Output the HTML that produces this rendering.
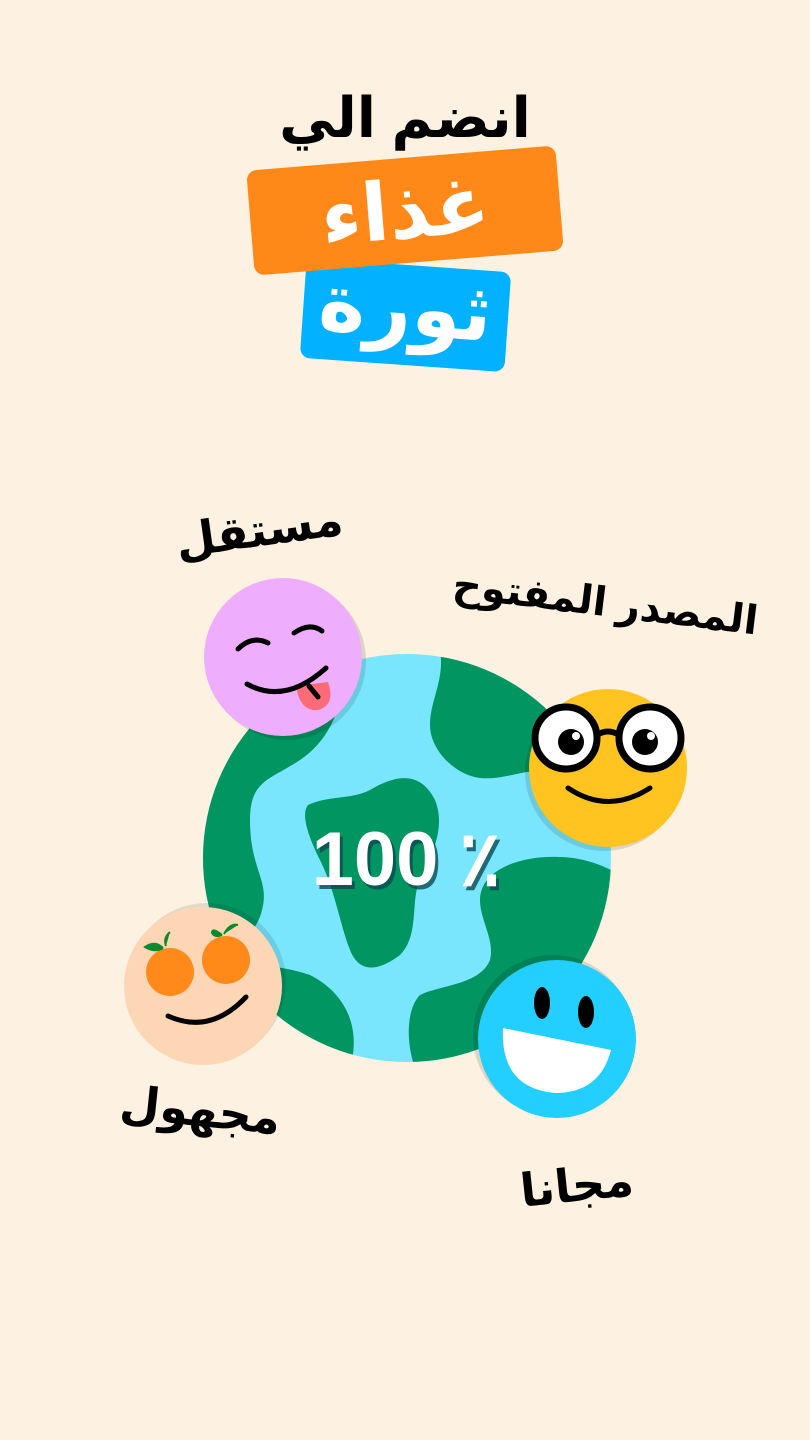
<!DOCTYPE html>
<html><head><meta charset="utf-8"><style>
body{margin:0;width:810px;height:1440px;background:#fdf2e1;position:relative;overflow:hidden;font-family:"Liberation Sans","Noto Sans CJK SC","DejaVu Sans",sans-serif;}
.a{position:absolute;}
.t{position:absolute;white-space:nowrap;font-weight:bold;color:#000;transform-origin:center;}
</style></head><body>
<div class="t" style="left:0;width:810px;top:80px;text-align:center;font-size:56px;line-height:76px;" dir="rtl">انضم الي</div>
<div class="a" style="left:303px;top:265px;width:205px;height:100px;background:#02b1ff;border-radius:10px;transform:rotate(4deg);"></div>
<div class="a" style="left:250px;top:158px;width:310px;height:105px;background:#ff8918;border-radius:10px;transform:rotate(-4.7deg);"></div>
<div class="t" style="left:250px;width:310px;top:163px;text-align:center;font-size:80px;line-height:95px;color:#fff;transform:rotate(-4.7deg);">غذاء</div>
<div class="t" style="left:303px;width:205px;top:258px;text-align:center;font-size:80px;line-height:100px;color:#fff;transform:rotate(4deg);">ثورة</div>

<svg class="a" style="left:0;top:0" width="810" height="1440">
<defs><clipPath id="g"><circle cx="407" cy="858" r="204"/></clipPath></defs>
<circle cx="407" cy="858" r="204" fill="#79e6fd"/>
<g clip-path="url(#g)" fill="#019562">
<path d="M200,650 L340,650 C350,700 330,740 300,760 C270,780 250,780 250,820 C250,870 270,880 262,910 C255,940 225,955 200,960 Z"/>
<path d="M440,650 L620,650 L620,780 C600,775 570,770 550,770 C520,770 505,780 480,778 C455,775 430,750 430,725 C430,700 445,680 440,650 Z"/>
<path d="M308,805 C330,795 350,800 370,790 C395,775 420,770 435,800 C445,825 435,850 420,880 C410,900 420,935 400,955 C380,970 360,975 350,950 C340,925 335,890 320,860 C310,840 300,815 308,805 Z"/>
<path d="M480,900 C480,870 520,855 560,857 C600,858 630,880 640,890 L640,1080 L420,1080 C405,1050 405,1010 420,995 C440,985 480,985 490,960 C495,940 480,920 480,900 Z"/>
<path d="M200,975 C240,960 280,965 310,975 C340,990 360,1020 352,1060 L200,1070 Z"/>
</g>
<text x="409" y="889" text-anchor="middle" font-family="Liberation Sans,sans-serif" font-size="76" font-weight="bold" fill="#0c4a52" opacity=".8">100 ٪</text>
<text x="406" y="885" text-anchor="middle" font-family="Liberation Sans,sans-serif" font-size="76" font-weight="bold" fill="#fff">100 ٪</text>

<circle cx="287" cy="661" r="79" fill="#000" opacity=".12"/>
<circle cx="283" cy="657" r="79" fill="#efaefd"/>
<path d="M238,649 Q252,635 268,643 M294,633 Q310,622 322,631" stroke="#000" stroke-width="5" fill="none" stroke-linecap="round"/>
<path d="M296,686 Q300,712 318,710 Q336,705 328,682 Z" fill="#fd6b78"/>
<path d="M247,684 Q285,705 326,668 M309,686 L318,697" stroke="#000" stroke-width="5" fill="none" stroke-linecap="round"/>

<circle cx="604" cy="772" r="79" fill="#000" opacity=".12"/>
<circle cx="608" cy="768" r="79" fill="#ffc420"/>
<circle cx="566" cy="738" r="31" fill="#fff" stroke="#000" stroke-width="7"/>
<circle cx="650" cy="738" r="31" fill="#fff" stroke="#000" stroke-width="7"/>
<path d="M597,735 Q608,728 619,735" stroke="#000" stroke-width="6" fill="none"/>
<circle cx="571" cy="742" r="13" fill="#000"/><circle cx="645" cy="742" r="13" fill="#000"/>
<circle cx="576" cy="736" r="4" fill="#fff"/><circle cx="651" cy="736" r="4" fill="#fff"/>
<path d="M568,788 Q608,815 650,788" stroke="#000" stroke-width="5" fill="none" stroke-linecap="round"/>

<circle cx="207" cy="982" r="79" fill="#000" opacity=".1"/>
<circle cx="203" cy="986" r="79" fill="#fdd6b6"/>
<circle cx="170" cy="972" r="24" fill="#ff8a19"/>
<circle cx="226" cy="960" r="24" fill="#ff8a19"/>
<path d="M163,948 Q155,940 145,947 Q155,953 163,948 M166,946 Q163,938 170,932" fill="#0a8a2e" stroke="#0a8a2e" stroke-width="2"/>
<path d="M222,935 Q212,927 212,933 Q215,938 222,935 M224,934 Q230,923 238,925" fill="#0a8a2e" stroke="#0a8a2e" stroke-width="2"/>
<path d="M168,1016 Q210,1035 246,997" stroke="#000" stroke-width="5" fill="none" stroke-linecap="round"/>

<circle cx="553" cy="1035" r="80" fill="#000" opacity=".12"/>
<circle cx="557" cy="1039" r="79" fill="#22cffe"/>
<ellipse cx="542" cy="1003" rx="8" ry="16" fill="#000"/>
<ellipse cx="586" cy="1012" rx="8" ry="16" fill="#000"/>
<path d="M503,1028 L611,1050 Q600,1093 555,1093 Q500,1088 503,1028 Z" fill="#fff"/>
</svg>

<div class="t" style="left:175px;top:500px;font-size:46px;line-height:60px;transform:rotate(-8deg);">مستقل</div>
<div class="t" style="left:452px;top:573px;font-size:40px;line-height:60px;transform:rotate(7deg);">المصدر المفتوح</div>
<div class="t" style="left:120px;top:1080px;font-size:46px;line-height:60px;transform:rotate(6deg);">مجهول</div>
<div class="t" style="left:520px;top:1155px;font-size:46px;line-height:60px;transform:rotate(-6deg);">مجانا</div>
</body></html>
